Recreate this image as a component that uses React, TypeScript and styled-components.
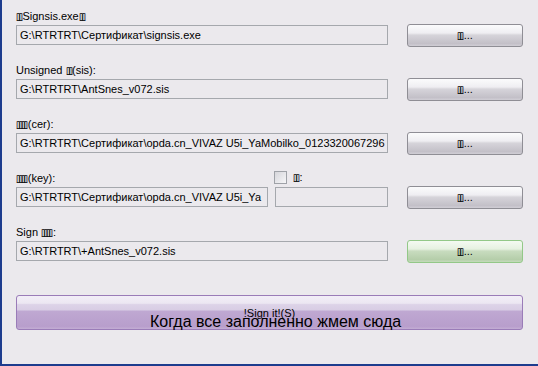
import React from "react";
import styled, { createGlobalStyle } from "styled-components";

const Global = createGlobalStyle`
  html, body {
    margin: 0;
    padding: 0;
    background: #ebe9ed;
  }
  body {
    font-family: "Liberation Sans", Arial, sans-serif;
    font-size: 11px;
    color: #000;
  }
`;

const Window = styled.div`
  box-sizing: border-box;
  width: 538px;
  height: 366px;
  background: #ebe9ed;
  border-left: 2px solid #1d3c8e;
  border-bottom: 2px solid #1d3c8e;
  padding: 10px 16px 0 14px;
  display: flex;
  flex-direction: column;
`;

const Row = styled.div`
  display: grid;
  grid-template-columns: 372px 116px;
  grid-template-rows: 13px 20px;
  column-gap: 19px;
  row-gap: 2px;
  margin-bottom: 19px;
`;

const Label = styled.div`
  line-height: 13px;
  white-space: nowrap;
  display: flex;
  align-items: center;
`;

// missing-glyph boxes, as the original dialog shows its Chinese labels
const Tofu = styled.span<{ $n: number }>`
  display: inline-block;
  font-family: "DejaVu Sans", sans-serif;
  font-size: 10px;
  line-height: 13px;
  letter-spacing: -2px;
  color: #000;
  text-shadow: 0.5px 0 0 #000;
  transform: scaleX(0.72);
  transform-origin: left center;
  margin-right: ${(p) => 1 - p.$n * 0.8}px;
`;

const Input = styled.div<{ $w?: number }>`
  box-sizing: border-box;
  height: 20px;
  width: ${(p) => (p.$w ? `${p.$w}px` : "100%")};
  border: 1px solid #a5a8ad;
  background: #ebe9ed;
  padding: 0 3px;
  line-height: 18px;
  white-space: nowrap;
  overflow: hidden;
`;

const Split = styled.div`
  display: flex;
  gap: 7px;
`;

type Tone = "gray" | "green";

const Browse = styled.button<{ $tone?: Tone }>`
  box-sizing: border-box;
  align-self: center;
  height: 23px;
  width: 116px;
  margin: 0;
  padding: 0;
  border-radius: 3px;
  font-family: "Liberation Sans", Arial, sans-serif;
  font-size: 11px;
  color: #000;
  border: 1px solid ${(p) => (p.$tone === "green" ? "#93c888" : "#8f8e95")};
  background: ${(p) =>
    p.$tone === "green"
      ? "linear-gradient(#f4faf2 0%, #e6f1e1 38%, #c8dcbf 48%, #b5ceaa 88%, #c4dbbb 100%)"
      : "linear-gradient(#fbfbfc 0%, #efeef2 38%, #d6d4da 48%, #c3c0c8 88%, #d0ced5 100%)"};
  display: flex;
  align-items: center;
  justify-content: center;
`;

const LabelPair = styled.div`
  display: grid;
  grid-template-columns: 258px auto;
  align-items: center;
`;

const CheckRow = styled.div`
  display: flex;
  align-items: center;
  gap: 6px;
  margin-top: -3px;
`;

const Check = styled.span`
  box-sizing: border-box;
  display: inline-block;
  width: 13px;
  height: 13px;
  border: 1px solid #9fa2a8;
  background: linear-gradient(135deg, #d6d6db 0%, #f6f6f8 100%);
`;

const SignWrap = styled.div`
  position: relative;
  margin-top: 15px;
  width: 507px;
`;

const SignButton = styled.button`
  box-sizing: border-box;
  width: 507px;
  height: 35px;
  margin: 0;
  padding: 0;
  border-radius: 3px;
  border: 1px solid #9a7cb8;
  font-family: "Liberation Sans", Arial, sans-serif;
  font-size: 11px;
  color: #000;
  background: linear-gradient(
    #f2eef7 0%,
    #ece7f2 22%,
    #ddd3e8 26%,
    #d8cde4 42%,
    #bfa8d2 46%,
    #b89ecc 92%,
    #c3add4 100%
  );
  display: flex;
  align-items: center;
  justify-content: center;
`;

const Hint = styled.div`
  position: absolute;
  left: 134px;
  top: 17px;
  font-size: 16px;
  line-height: 19px;
  white-space: nowrap;
  pointer-events: none;
`;

const T = ({ n }: { n: number }) => <Tofu $n={n}>{"▯".repeat(n)}</Tofu>;

export default function App() {
  return (
    <>
      <Global />
      <Window>
        <Row>
          <Label>
            <T n={2} />Signsis.exe<T n={2} />
          </Label>
          <span />
          <Input>G:\RTRTRT\Сертификат\signsis.exe</Input>
          <Browse><T n={2} />...</Browse>
        </Row>
        <Row>
          <Label>
            Unsigned&nbsp;<T n={2} />(sis):
          </Label>
          <span />
          <Input>G:\RTRTRT\AntSnes_v072.sis</Input>
          <Browse><T n={2} />...</Browse>
        </Row>
        <Row>
          <Label>
            <T n={4} />(cer):
          </Label>
          <span />
          <Input>G:\RTRTRT\Сертификат\opda.cn_VIVAZ U5i_YaMobilko_0123320067296</Input>
          <Browse><T n={2} />...</Browse>
        </Row>
        <Row>
          <LabelPair>
            <Label>
              <T n={4} />(key):
            </Label>
            <CheckRow>
              <Check />
              <Label><T n={2} />:</Label>
            </CheckRow>
          </LabelPair>
          <span />
          <Split>
            <Input $w={252}>G:\RTRTRT\Сертификат\opda.cn_VIVAZ U5i_Ya</Input>
            <Input $w={113} />
          </Split>
          <Browse><T n={2} />...</Browse>
        </Row>
        <Row>
          <Label>
            Sign&nbsp;<T n={4} />:
          </Label>
          <span />
          <Input>G:\RTRTRT\+AntSnes_v072.sis</Input>
          <Browse $tone="green"><T n={2} />...</Browse>
        </Row>
        <SignWrap>
          <SignButton>!Sign it!(S)</SignButton>
          <Hint>Когда все заполненно жмем сюда</Hint>
        </SignWrap>
      </Window>
    </>
  );
}
